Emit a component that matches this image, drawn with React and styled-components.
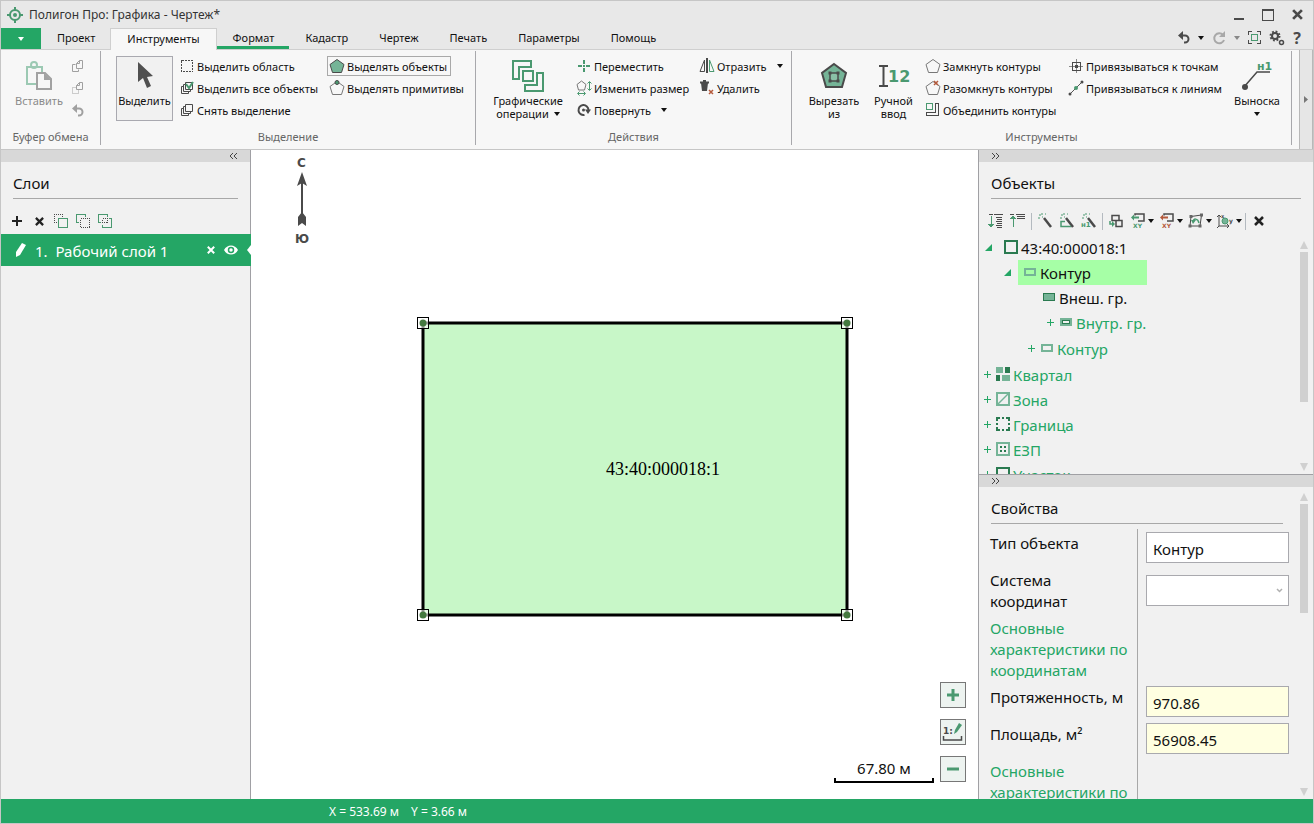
import React from "react";
import styled, { createGlobalStyle } from "styled-components";

const green = "#24a665";
const ink = "#4a4a4a";
const leaf = "#4a9970";
const mint = "#75b497";
const pine = "#2a7a50";

/* ---------- icons ---------- */

const Icon = ({ w = 16, h = 16, crisp, children }) => (
  <svg
    width={w}
    height={h}
    viewBox={`0 0 ${w} ${h}`}
    fill="none"
    stroke={ink}
    shapeRendering={crisp ? "crispEdges" : "auto"}
    aria-hidden="true"
  >
    {children}
  </svg>
);

const Caret = ({ color = "#111" }) => (
  <Icon w={6} h={4}>
    <path d="M0 0h6L3 4z" fill={color} stroke="none" />
  </Icon>
);

const LogoIcon = () => (
  <Icon>
    <g stroke={leaf}>
      <circle cx="8" cy="8" r="5" strokeWidth="2" />
      <circle cx="8" cy="8" r="2" fill={leaf} stroke="none" />
      <path d="M8 0v4M8 12v4M0 8h4M12 8h4" strokeWidth="2" />
    </g>
  </Icon>
);

const PasteIcon = () => (
  <Icon w={26} h={30}>
    <g stroke="#9cc9b3" strokeWidth="2">
      <path d="M11 23H1V6h15v6" />
      <circle cx="8" cy="4" r="3" />
    </g>
    <path d="M11 12h8l6 6v10H11z" stroke="#a2a2a2" strokeWidth="2" fill="#f7f7f7" />
    <path d="M18 12v7h7z" fill="#a2a2a2" stroke="none" />
  </Icon>
);

const CopyIcon = () => (
  <Icon w={12} h={13}>
    <g stroke="#a0a0a0">
      <path d="M3.500 4.500h-3v7h6v-2" />
      <path d="M4.500 3.500l3-3h3v8h-6zM4.500 3.500h3v-3" />
    </g>
  </Icon>
);

const CutIcon = () => (
  <Icon w={12} h={13}>
    <g stroke="#a0a0a0">
      <path d="M4.500 5.500h-4v6h6v-3" strokeDasharray="1 1" />
      <path d="M4.500 3.500l3-3h3v7h-6zM4.500 3.500h3v-3" />
    </g>
  </Icon>
);

const UndoIcon = ({ color = ink }) => (
  <Icon w={12} h={13}>
    <path d="M4 4.500h3a3.500 3.500 0 0 1 0 7H6" stroke={color} strokeWidth="2" />
    <path d="M0 4.500L5 0v9z" fill={color} stroke="none" />
  </Icon>
);

const RedoIcon = () => (
  <Icon w={14} h={14}>
    <path d="M11 4A5 5 0 1 0 12 9" stroke="#a8a8a8" strokeWidth="2" />
    <path d="M13 0v6H7z" fill="#a8a8a8" stroke="none" />
  </Icon>
);

const FrameIcon = () => (
  <Icon w={13} h={13} crisp>
    <path d="M.5 4V.5H4M9 .5h3.500V4M12.500 9v3.500H9M4 12.500H.5V9" />
    <rect x="3.500" y="3.500" width="6" height="6" stroke={leaf} />
  </Icon>
);

const GearsIcon = () => (
  <Icon>
    <circle cx="6" cy="6" r="3" strokeWidth="2" />
    <circle cx="6" cy="6" r="4.500" strokeWidth="2" strokeDasharray="1.800 1.734" />
    <circle cx="12.500" cy="12.500" r="2" strokeWidth="1.500" />
  </Icon>
);

const CursorIcon = () => (
  <Icon w={16} h={28}>
    <path d="M1 0v20l5-4 4 10 4-2-4-9 6-1z" fill="#505050" stroke="none" />
  </Icon>
);

const DashedBoxIcon = () => (
  <Icon w={14} h={14} crisp>
    <rect x="1.500" y="1.500" width="11" height="11" strokeDasharray="2 1" />
  </Icon>
);

const StackIcon = ({ check }) => (
  <Icon w={14} h={14}>
    <path d="M5.500 1.500h7v7h-7zM5.500 3.500h-2v7h7v-2M3.500 5.500h-2v7h7v-2" />
    {check && <path d="M6 3l3 4 4-6" stroke={leaf} strokeWidth="2" />}
  </Icon>
);

const PentagonIcon = ({ fill = "none", stroke = "#777", children }) => (
  <Icon>
    <path d="M8 1.500l7 5-2.500 8h-9l-2.500-8z" fill={fill} stroke={stroke} />
    {children}
  </Icon>
);

const GraphicsIcon = () => (
  <Icon w={32} h={32} crisp>
    <g stroke={leaf} strokeWidth="2">
      <path d="M1 1h18v6H7v12H1z" />
      <path d="M31 13v18H13v-6h12V13z" />
      <rect x="11" y="11" width="10" height="10" fill="#f7f7f7" />
    </g>
  </Icon>
);

const MoveIcon = () => (
  <Icon w={14} h={14} crisp>
    <path
      d="M7 1v4M7 9v4M1 7h4M9 7h4M7 6v2"
      stroke={leaf}
      strokeWidth="2"
    />
  </Icon>
);

const ResizeIcon = () => (
  <Icon>
    <path d="M5.500 1L10 4.500 8.500 10h-6L1 4.500z" stroke="#777" />
    <g stroke={leaf}>
      <path d="M13.500 2v8M2 13.500h7" />
      <path d="M11.500 3.500l2-2 2 2M11.500 8.500l2 2 2-2M3.500 11.500l-2 2 2 2M7.500 11.500l2 2-2 2" />
    </g>
  </Icon>
);

const RotateIcon = () => (
  <Icon w={14} h={14}>
    <path d="M7.500 12A5 5 0 1 1 11.500 7" strokeWidth="2" />
    <path d="M8 6.500h6l-3 4.500z" fill={ink} stroke="none" />
    <circle cx="6.500" cy="7" r="1.500" fill={ink} stroke="none" />
  </Icon>
);

const MirrorIcon = () => (
  <Icon>
    <path d="M5.500 2v11.500H1z" />
    <path d="M8 0v15" strokeWidth="2" />
    <path d="M10.500 2v11.500H15z" stroke={leaf} />
  </Icon>
);

const TrashIcon = () => (
  <Icon>
    <path d="M1 2.500h9M4 1h3" strokeWidth="2" />
    <path d="M2 3h7l-1 8H3z" fill={ink} stroke="none" />
    <path d="M10 10l4 4M14 10l-4 4" stroke="#b55a3c" strokeWidth="1.500" />
  </Icon>
);

const ClipIcon = () => (
  <Icon w={28} h={28}>
    <path d="M14 2l12 9-4 14H6L2 11z" fill={mint} stroke={ink} strokeWidth="2" />
    <rect x="10" y="11" width="8" height="8" fill="#8ac0a6" strokeWidth="1.500" />
    <path d="M8.500 9.500h3v3h-3zM16.500 9.500h3v3h-3zM8.500 17.500h3v3h-3zM16.500 17.500h3v3h-3z" fill={ink} stroke="none" />
  </Icon>
);

const IconText = styled.text`
  font-family: "DejaVu Sans", sans-serif;
  font-weight: 700;
  font-size: ${(p) => p.$size}px;
  fill: ${(p) => p.$color || leaf};
  stroke: none;
`;

const ManualIcon = () => (
  <Icon w={34} h={24}>
    <path d="M2 2h9M2 22h9M6.500 2v20" strokeWidth="2" />
    <IconText x="11" y="18" $size={16}>
      12
    </IconText>
  </Icon>
);

const MergeIcon = () => (
  <Icon w={14} h={14} crisp>
    <path d="M9.500 .5h3v12H.5v-3h9z" />
    <rect x=".5" y=".5" width="6" height="6" stroke={leaf} />
  </Icon>
);

const SnapPointIcon = () => (
  <Icon w={14} h={14} crisp>
    <path d="M7.500 0v14M0 7.500h14" stroke="#888" />
    <rect x="3.500" y="3.500" width="8" height="8" />
    <rect x="6" y="6" width="3" height="3" fill={ink} stroke="none" />
  </Icon>
);

const SnapLineIcon = () => (
  <Icon>
    <path d="M1.500 14.500L14.500 1.500" stroke="#555" />
    <circle cx="2" cy="14" r="1.500" fill={ink} stroke="none" />
    <circle cx="14" cy="2" r="1.500" fill={ink} stroke="none" />
    <circle cx="8" cy="8" r="2" fill={leaf} stroke="none" />
  </Icon>
);

const CalloutIcon = () => (
  <Icon w={34} h={30}>
    <path d="M4 26L17 11h13" strokeWidth="1.500" />
    <circle cx="5" cy="26" r="3" fill={ink} stroke="none" />
    <IconText x="17" y="9" $size={11}>
      н1
    </IconText>
  </Icon>
);

const CrossIcon = ({ color = "#222", size = 10 }) => (
  <svg width={size} height={size} viewBox="0 0 10 10" aria-hidden="true">
    <path d="M1 1l8 8M9 1l-8 8" stroke={color} strokeWidth="2.500" />
  </svg>
);

const PlusIcon = () => (
  <Icon w={12} h={12} crisp>
    <path d="M6 1v10M1 6h10" stroke="#222" strokeWidth="2" />
  </Icon>
);

const LayerPairIcon = ({ kind }) => (
  <Icon w={14} h={14} crisp>
    {kind === "front" && (
      <>
        <path d="M8.500 3V.5h-8v8H3" strokeDasharray="1 1" />
        <rect x="4.500" y="4.500" width="9" height="9" stroke={leaf} />
      </>
    )}
    {kind === "back" && (
      <>
        <path d="M9.500 3V.5h-9v8H3" stroke={leaf} />
        <rect x="4.500" y="4.500" width="9" height="9" strokeDasharray="1 1" />
      </>
    )}
    {kind === "both" && (
      <>
        <path d="M9.500 3V.5h-9v8H3M11 4.500h2.500v9h-9V11" stroke={leaf} />
        <rect x="4.500" y="4.500" width="5" height="4" strokeDasharray="1 1" />
      </>
    )}
  </Icon>
);

const PencilIcon = () => (
  <Icon w={12} h={14}>
    <path d="M7 0l4 2-6 10-4 2V9z" fill="#fff" stroke="none" />
  </Icon>
);

const EyeIcon = () => (
  <Icon w={14} h={10}>
    <path d="M0 5C3-1 11-1 14 5 11 11 3 11 0 5z" fill="#fff" stroke="none" />
    <circle cx="7" cy="5" r="2.500" stroke={green} strokeWidth="1.500" />
  </Icon>
);

const ChevronsIcon = ({ right }) => (
  <Icon w={10} h={8}>
    <path
      d={right ? "M1 1l3 3-3 3M5 1l3 3-3 3" : "M5 1L2 4l3 3M9 1L6 4l3 3"}
      stroke="#444"
    />
  </Icon>
);

const ExpandAllIcon = () => (
  <Icon w={16} h={14} crisp>
    <path d="M1 .5h4M6 .5h9M8 3.500h6M9 5.500h5M8 7.500h6M9 9.500h5M8 11.500h6M9 13.500h5" />
    <path d="M3 2v9" stroke={leaf} />
    <path d="M0 10h6l-3 4z" fill={leaf} stroke="none" />
  </Icon>
);

const CollapseAllIcon = () => (
  <Icon w={16} h={14} crisp>
    <path d="M0 .5h4M6 .5h9M7 2.500h8M7 4.500h8" />
    <path d="M3 4v9" stroke={leaf} />
    <path d="M0 5h6L3 1z" fill={leaf} stroke="none" />
  </Icon>
);

const WandIcon = ({ kind }) => (
  <Icon>
    <path d="M7 5l7 9" strokeWidth="2.500" />
    <path d="M2 2h2M5 0v2M1 5h2M5 4h1M8 1h1" stroke={leaf} />
    {kind === "box" && <path d="M6 8.500H2v5h10" stroke={leaf} strokeWidth="1.500" />}
    {kind === "label" && (
      <IconText x="0" y="14" $size={7}>
        н1
      </IconText>
    )}
  </Icon>
);

const TransferIcon = () => (
  <Icon w={14} h={14}>
    <path d="M3 1.500h7v5H3zM7 6.500h6v6H7z" strokeWidth="1.500" />
    <path d="M1 7v3h2" stroke={leaf} strokeWidth="1.500" />
    <path d="M3 7l3 3-3 3z" fill={leaf} stroke="none" />
  </Icon>
);

const XyIcon = ({ color }) => (
  <Icon>
    <path d="M5 2.500V1h9v7H8" strokeWidth="1.500" />
    <path d="M3 4.500h6" stroke={color} strokeWidth="2" />
    <path d="M4 1.500v6L1 4.500z" fill={color} stroke="none" />
    <IconText x="3" y="15" $size={6} $color={color}>
      XY
    </IconText>
  </Icon>
);

const TransformIcon = () => (
  <Icon>
    <path d="M3 3.500L13.500 2 12 13H2z" />
    <path d="M1.500 2h3v3h-3zM12 .5h3v3h-3zM10.500 11.500h3v3h-3zM.5 11.500h3v3h-3z" fill="#666" stroke="none" />
    <path d="M5 9c0-4 5-4 6 1" stroke={leaf} strokeWidth="1.500" />
    <path d="M3 7h5l-3 4z" fill={leaf} stroke="none" />
  </Icon>
);

const AxesIcon = () => (
  <Icon w={18} h={16}>
    <path d="M3 2v11h10M1 4l2-2 2 2M11 11l2 2-2 2M1 15l2-2" />
    <circle cx="9" cy="8" r="3" fill={mint} stroke={leaf} />
    <IconText x="5" y="5" $size={5} $color={ink}>
      x
    </IconText>
    <IconText x="13" y="10" $size={6} $color={ink}>
      y
    </IconText>
  </Icon>
);

const treeIcons = {
  square: (
    <Icon w={14} h={14} crisp>
      <rect x="1" y="1" width="12" height="12" stroke={pine} strokeWidth="2" />
    </Icon>
  ),
  outline: (
    <Icon w={12} h={8} crisp>
      <rect x="1" y="1" width="10" height="6" stroke={mint} strokeWidth="2" />
    </Icon>
  ),
  filled: (
    <Icon w={12} h={8} crisp>
      <rect x=".5" y=".5" width="11" height="7" fill={mint} stroke={pine} />
    </Icon>
  ),
  inner: (
    <Icon w={12} h={8} crisp>
      <rect width="12" height="8" fill={mint} stroke="none" />
      <rect x="2.500" y="2.500" width="7" height="3" fill="#f1f1f1" stroke={pine} />
    </Icon>
  ),
  quarter: (
    <Icon w={14} h={14} crisp>
      <path d="M0 0h7v6H0zM6 8h8v6H6z" fill={mint} stroke="none" />
      <path d="M9 0h5v6H9zM0 8h4v6H0z" fill={pine} stroke="none" />
    </Icon>
  ),
  zone: (
    <Icon w={14} h={14}>
      <rect x="1" y="1" width="12" height="12" stroke={mint} strokeWidth="2" />
      <path d="M2 12L12 2" stroke={mint} strokeWidth="1.500" />
    </Icon>
  ),
  border: (
    <Icon w={14} h={14} crisp>
      <path
        d="M1 4V1h3M6 1h2M10 1h3v3M13 6v2M13 10v3h-3M8 13H6M4 13H1v-3M1 8V6"
        stroke={pine}
        strokeWidth="2"
      />
    </Icon>
  ),
  ezp: (
    <Icon w={14} h={14} crisp>
      <rect x="1" y="1" width="12" height="12" stroke={mint} strokeWidth="2" />
      <path d="M4 4h2v2H4zM8 4h2v2H8zM4 8h2v2H4zM8 8h2v2H8z" fill={pine} stroke="none" />
    </Icon>
  ),
};

/* ---------- layout ---------- */

const GlobalStyle = createGlobalStyle`
  * {
    box-sizing: border-box;
  }
  body {
    margin: 0;
    font-family: "Noto Sans", "Open Sans", sans-serif;
    font-size: 11px;
    color: #111;
  }
  button, input, select {
    font: inherit;
    color: inherit;
  }
  button {
    padding: 0;
    border: none;
    background: none;
  }
  svg {
    display: block;
    flex: none;
  }
`;

const Window = styled.div`
  display: flex;
  flex-direction: column;
  height: 100vh;
  overflow: hidden;
  border: 1px solid #c6c6c6;
  background: #e8e8e8;
`;

const TitleBar = styled.header`
  display: flex;
  align-items: center;
  gap: 6px;
  height: 27px;
  padding: 0 10px 0 6px;
  h1 {
    flex: 1;
    margin: 0;
    font-size: 12px;
    font-weight: 400;
    color: #333;
  }
`;

const WindowButtons = styled.div`
  display: flex;
  gap: 18px;
  button {
    display: flex;
    height: 12px;
    align-items: center;
  }
`;

const TabBar = styled.nav`
  display: flex;
  height: 21px;
`;

const MenuButton = styled.button`
  display: flex;
  align-items: center;
  justify-content: center;
  width: 40px;
  background: ${green};
`;

const Tab = styled.button`
  position: relative;
  margin-bottom: ${(p) => (p.$active ? -1 : 0)}px;
  padding: 0 ${(p) => (p.$active ? 16 : 15)}px 2px 16px;
  border: 1px solid #cfcfcf;
  border-width: ${(p) => (p.$active ? "1px 1px 0" : 0)};
  background: ${(p) => (p.$active ? "#f7f7f7" : "none")};
  box-shadow: ${(p) => (p.$marked ? `inset 0 -3px ${green}` : "none")};
`;

const QuickTools = styled.div`
  display: flex;
  align-items: center;
  gap: 8px;
  margin-left: auto;
  padding: 0 12px 2px 0;
  button {
    display: flex;
    align-items: center;
    font-size: 16px;
    font-weight: 700;
    line-height: 16px;
    color: ${ink};
  }
`;

const Ribbon = styled.div`
  display: flex;
  flex: none;
  height: 101px;
  border-top: 1px solid #cfcfcf;
  border-bottom: 1px solid #c6c6c6;
  background: #f7f7f7;
`;

const Group = styled.section`
  display: flex;
  flex-direction: column;
  flex: none;
  width: ${(p) => p.$width}px;
  height: 94px;
  margin-top: 1px;
  border-right: 1px solid #a8a8ac;
`;

const GroupBody = styled.div`
  display: flex;
  flex: 1;
  gap: ${(p) => p.$gap}px;
  padding: 5px 0 0 ${(p) => p.$left}px;
`;

const GroupTitle = styled.div`
  height: 17px;
  line-height: 17px;
  text-align: center;
  color: #666;
`;

const BigButton = styled.button`
  display: flex;
  flex-direction: column;
  align-items: center;
  width: ${(p) => p.$width}px;
  height: 65px;
  line-height: 13px;
  white-space: nowrap;
  color: ${(p) => (p.disabled ? "#8a8a8a" : "#111")};
  border: 1px solid ${(p) => (p.$active ? "#a9a9b0" : "transparent")};
  background: ${(p) => (p.$active ? "#f1f1f1" : "none")};
`;

const BigIcon = styled.span`
  display: flex;
  align-items: center;
  justify-content: center;
  height: 37px;
`;

const Inline = styled.span`
  display: flex;
  align-items: center;
  gap: 5px;
  height: 13px;
`;

const Column = styled.div`
  display: flex;
  flex-direction: column;
  align-items: flex-start;
  width: ${(p) => p.$width}px;
`;

const SmallButton = styled.button`
  display: flex;
  align-items: center;
  gap: 2px;
  height: 20px;
  margin-bottom: 2px;
  padding: 0 3px 0 1px;
  white-space: nowrap;
  border: 1px solid ${(p) => (p.$active ? "#a9a9a9" : "transparent")};
`;

const SmallIcon = styled.span`
  display: flex;
  justify-content: center;
  width: 16px;
`;

const CaretSlot = styled.span`
  padding-left: 8px;
`;

const RibbonScroll = styled.button`
  display: flex;
  align-items: center;
  justify-content: center;
  width: 14px;
  margin-left: auto;
  border-left: 1px solid #b8b8b8;
  border-right: 1px solid #b8b8b8;
  background: #e6e6e6;
`;

const Workspace = styled.div`
  display: flex;
  flex: 1;
  min-height: 0;
`;

const Side = styled.aside`
  display: flex;
  flex-direction: column;
  flex: none;
  width: ${(p) => p.$width}px;
  background: #f1f1f1;
  border: 0 solid #a0a0a4;
  border-width: ${(p) => (p.$right ? "0 0 0 1px" : "0 1px 0 0")};
`;

const Strip = styled.div`
  display: flex;
  flex: none;
  align-items: center;
  justify-content: ${(p) => (p.$right ? "flex-start" : "flex-end")};
  height: 12px;
  padding: 0 12px;
  background: #d8d8d8;
`;

const PanelTitle = styled.h2`
  flex: none;
  margin: 0 ${(p) => p.$end || 12}px 0 12px;
  height: 37px;
  font-size: 15px;
  font-weight: 400;
  line-height: 42px;
  border-bottom: 1px solid #a8a8a8;
`;

const Toolbar = styled.div`
  display: flex;
  flex: none;
  align-items: center;
  height: 34px;
  padding: 10px 0 0 ${(p) => (p.$right ? 6 : 5)}px;
  margin-bottom: ${(p) => (p.$right ? 2 : 1)}px;
`;

const ToolButton = styled.button`
  display: flex;
  align-items: center;
  justify-content: center;
  gap: 2px;
  width: ${(p) => (p.$menu ? 29 : 22)}px;
  height: 22px;
`;

const Divider = styled.span`
  width: 1px;
  height: 17px;
  margin: 0 2px;
  background: #b4bac0;
`;

const LayerRow = styled.div`
  display: flex;
  align-items: center;
  height: 32px;
  margin-right: -1px;
  padding-left: 14px;
  font-size: 15px;
  color: #fff;
  background: ${green};
  button {
    display: flex;
    margin-right: 9px;
  }
`;

const LayerName = styled.span`
  flex: 1;
  padding: 2px 0 0 8px;
  white-space: pre;
`;

const Canvas = styled.main`
  position: relative;
  flex: 1;
  min-width: 0;
  background: #fff;
`;

const Compass = styled.div`
  position: absolute;
  top: 4px;
  left: 43px;
`;

const MapTools = styled.div`
  position: absolute;
  right: 12px;
  bottom: 17px;
  display: flex;
  align-items: flex-end;
  gap: 6px;
`;

const ZoomButtons = styled.div`
  display: flex;
  flex-direction: column;
  gap: 11px;
  button {
    display: flex;
    align-items: center;
    justify-content: center;
    width: 26px;
    height: 26px;
    border: 1px solid #777;
    background: #edf3f0;
  }
`;

const ScaleBar = styled.div`
  width: 100px;
  height: 26px;
  text-align: center;
  font-size: 15px;
  line-height: 25px;
`;

const ScaleRule = styled.div`
  height: 5px;
  margin-top: -3px;
  border: solid #000;
  border-width: 0 2px 2px;
`;

const Objects = styled.section`
  display: flex;
  flex-direction: column;
  flex: 1;
  min-height: 0;
`;

const Properties = styled.section`
  display: flex;
  flex-direction: column;
  flex: 0 0 325px;
  min-height: 0;
  overflow: hidden;
  border-top: 1px solid #a0a0a4;
`;

const ScrollArea = styled.div`
  display: flex;
  flex: 1 1 0;
  min-height: 0;
`;

const ScrollContent = styled.div`
  flex: 1;
  min-width: 0;
  overflow: hidden;
`;

const ScrollTrack = styled.div`
  display: flex;
  flex-direction: column;
  flex: none;
  width: 8px;
  margin: 6px 5px 3px 8px;
`;

const Thumb = styled.div`
  flex: 0 0 ${(p) => p.$size}%;
  margin: 3px 0 auto;
  background: #d0d0d0;
`;

const Tree = styled.ul`
  margin: 0;
  padding: 0 0 ${(p) => (p.$nested ? 1 : 0)}px;
  list-style: none;
`;

const Node = styled.button`
  display: flex;
  align-items: center;
  height: 25px;
  font-size: 15px;
  white-space: nowrap;
  color: ${(p) => (p.$ghost ? green : "#111")};
  padding-left: ${(p) => p.$indent}px;
`;

const Toggle = styled.span`
  display: flex;
  align-items: center;
  width: 12px;
`;

const NodeLabel = styled.span`
  display: flex;
  align-items: center;
  gap: ${(p) => (p.$nested ? 4 : 3)}px;
  height: 25px;
  min-width: ${(p) => (p.$selected ? 129 : 0)}px;
  margin-left: ${(p) => (p.$selected ? 4 : 0)}px;
  padding-left: ${(p) => p.$pad}px;
  background: ${(p) => (p.$selected ? "#a6ffa6" : "none")};
  svg {
    margin-bottom: 2px;
  }
`;

const PropTable = styled.div`
  margin-top: 5px;
  font-size: 15px;
`;

const PropRow = styled.div`
  display: grid;
  grid-template-columns: 159px 1fr;
  min-height: 37px;
`;

const PropLabel = styled.label`
  padding: 4px 8px 2px 11px;
  line-height: 21px;
  color: ${(p) => (p.$heading ? green : "#111")};
  border-right: 1px solid #a8a8a8;
`;

const Field = styled.div`
  position: relative;
  display: flex;
  align-items: center;
  padding: 3px 3px 3px 8px;
  input,
  select {
    width: 100%;
    height: 31px;
    padding: 2px 6px 0;
    border: 1px solid #a9a9ae;
    border-radius: 0;
    background: ${(p) => (p.$calculated ? "#ffffe1" : "#fff")};
    outline: none;
    appearance: none;
  }
`;

const SelectArrow = styled.span`
  position: absolute;
  right: 9px;
  pointer-events: none;
`;

const StatusBar = styled.footer`
  display: flex;
  flex: none;
  gap: 12px;
  align-items: center;
  height: 24px;
  padding-left: 328px;
  font-size: 12px;
  color: #fff;
  background: ${green};
`;

/* ---------- data ---------- */

const tabs = [
  { name: "Проект" },
  { name: "Инструменты", active: true },
  { name: "Формат", marked: true },
  { name: "Кадастр" },
  { name: "Чертеж" },
  { name: "Печать" },
  { name: "Параметры" },
  { name: "Помощь" },
];

const objects = [
  {
    label: "43:40:000018:1",
    icon: "square",
    indent: 4,
    pad: 9,
    open: true,
    children: [
      {
        label: "Контур",
        icon: "outline",
        indent: 23,
        pad: 6,
        open: true,
        selected: true,
        children: [
          { label: "Внеш. гр.", icon: "filled", indent: 64, pad: 0, leaf: true },
          { label: "Внутр. гр.", icon: "inner", indent: 67, pad: 2, ghost: true },
        ],
      },
      { label: "Контур", icon: "outline", indent: 48, pad: 2, ghost: true },
    ],
  },
  { label: "Квартал", icon: "quarter", indent: 4, pad: 1, ghost: true },
  { label: "Зона", icon: "zone", indent: 4, pad: 1, ghost: true },
  { label: "Граница", icon: "border", indent: 4, pad: 1, ghost: true },
  { label: "ЕЗП", icon: "ezp", indent: 4, pad: 1, ghost: true },
  { label: "Участок", icon: "square", indent: 4, pad: 1, ghost: true },
];

/* ---------- parts ---------- */

const Small = ({ icon, label, active, caret }) => (
  <SmallButton $active={active}>
    <SmallIcon>{icon}</SmallIcon>
    {label}
    {caret && (
      <CaretSlot>
        <Caret />
      </CaretSlot>
    )}
  </SmallButton>
);

const TreeToggle = ({ open }) => (
  <Toggle>
    {open ? (
      <Icon w={12} h={8}>
        <path d="M9 0v7H2z" fill={green} stroke="none" />
      </Icon>
    ) : (
      <Icon w={9} h={9} crisp>
        <path d="M4.500 1v7M1 4.500h7" stroke={green} />
      </Icon>
    )}
  </Toggle>
);

const TreeLevel = ({ items, nested }) => (
  <Tree $nested={nested}>
    {items.map((item, i) => (
      <li key={i}>
        <Node $indent={item.indent} $ghost={item.ghost}>
          {!item.leaf && <TreeToggle open={item.open} />}
          <NodeLabel $selected={item.selected} $nested={nested} $pad={item.pad}>
            {treeIcons[item.icon]}
            {item.label}
          </NodeLabel>
        </Node>
        {item.children && <TreeLevel items={item.children} nested />}
      </li>
    ))}
  </Tree>
);

const ScrollBar = ({ size }) => (
  <ScrollTrack>
    <Icon w={8} h={8}>
      <path d="M4 0l4 8H0z" fill="#d0d0d0" stroke="none" />
    </Icon>
    <Thumb $size={size} />
    <Icon w={8} h={8}>
      <path d="M4 8l4-8H0z" fill="#d0d0d0" stroke="none" />
    </Icon>
  </ScrollTrack>
);

const Handle = ({ x, y }) => (
  <g>
    <rect x={x - 5.5} y={y - 5.5} width="11" height="11" fill="#fff" fillOpacity=".6" stroke="#000" />
    <circle cx={x} cy={y} r="3.500" fill="#43793f" />
  </g>
);

const ParcelMap = () => (
  <svg width="100%" height="100%" viewBox="0 0 727 649" preserveAspectRatio="xMidYMid meet">
    <rect x="172" y="173" width="424" height="292" fill="#c8f7c8" stroke="#000" strokeWidth="3" />
    <text x="412" y="325" textAnchor="middle" fontFamily="Liberation Serif, serif" fontSize="18">
      43:40:000018:1
    </text>
    <Handle x={172} y={173} />
    <Handle x={596} y={173} />
    <Handle x={172} y={465} />
    <Handle x={596} y={465} />
  </svg>
);

const App = () => {
  return (
    <Window>
      <GlobalStyle />
      <TitleBar>
        <LogoIcon />
        <h1>Полигон Про: Графика - Чертеж*</h1>
        <WindowButtons>
          <button aria-label="Свернуть">
            <Icon w={10} h={12} crisp>
              <path d="M0 10h10" strokeWidth="2" />
            </Icon>
          </button>
          <button aria-label="Развернуть">
            <Icon w={12} h={12} crisp>
              <path d="M.5 1h11v10.500H.5z" />
              <path d="M0 1h12" strokeWidth="2" />
            </Icon>
          </button>
          <button aria-label="Закрыть">
            <CrossIcon color={ink} size={11} />
          </button>
        </WindowButtons>
      </TitleBar>

      <TabBar>
        <MenuButton aria-label="Меню">
          <Caret color="#fff" />
        </MenuButton>
        {tabs.map((tab) => (
          <Tab key={tab.name} $active={tab.active} $marked={tab.marked}>
            {tab.name}
          </Tab>
        ))}
        <QuickTools>
          <button aria-label="Отменить">
            <UndoIcon />
          </button>
          <Caret />
          <button aria-label="Вернуть">
            <RedoIcon />
          </button>
          <Caret color="#888" />
          <button aria-label="Во весь экран">
            <FrameIcon />
          </button>
          <button aria-label="Настройки">
            <GearsIcon />
          </button>
          <button>?</button>
        </QuickTools>
      </TabBar>

      <Ribbon>
        <Group $width={100}>
          <GroupBody $left={9} $gap={2}>
            <BigButton $width={58} disabled>
              <BigIcon>
                <PasteIcon />
              </BigIcon>
              Вставить
            </BigButton>
            <Column $width={20}>
              <SmallButton aria-label="Копировать">
                <CopyIcon />
              </SmallButton>
              <SmallButton aria-label="Вырезать">
                <CutIcon />
              </SmallButton>
              <SmallButton aria-label="Отменить вставку">
                <UndoIcon color="#a0a0a0" />
              </SmallButton>
            </Column>
          </GroupBody>
          <GroupTitle>Буфер обмена</GroupTitle>
        </Group>

        <Group $width={375}>
          <GroupBody $left={15} $gap={4}>
            <BigButton $width={57} $active>
              <BigIcon>
                <CursorIcon />
              </BigIcon>
              Выделить
            </BigButton>
            <Column $width={146}>
              <Small icon={<DashedBoxIcon />} label="Выделить область" />
              <Small icon={<StackIcon check />} label="Выделить все объекты" />
              <Small icon={<StackIcon />} label="Снять выделение" />
            </Column>
            <Column $width={140}>
              <Small
                active
                icon={<PentagonIcon fill={mint} stroke={ink} />}
                label="Выделять объекты"
              />
              <Small
                icon={
                  <PentagonIcon>
                    <circle cx="8" cy="2.500" r="2" fill={leaf} />
                  </PentagonIcon>
                }
                label="Выделять примитивы"
              />
            </Column>
          </GroupBody>
          <GroupTitle>Выделение</GroupTitle>
        </Group>

        <Group $width={316}>
          <GroupBody $left={12} $gap={6}>
            <BigButton $width={80}>
              <BigIcon>
                <GraphicsIcon />
              </BigIcon>
              Графические
              <Inline>
                операции <Caret />
              </Inline>
            </BigButton>
            <Column $width={117}>
              <Small icon={<MoveIcon />} label="Переместить" />
              <Small icon={<ResizeIcon />} label="Изменить размер" />
              <Small icon={<RotateIcon />} label="Повернуть" caret />
            </Column>
            <Column $width={90}>
              <Small icon={<MirrorIcon />} label="Отразить" caret />
              <Small icon={<TrashIcon />} label="Удалить" />
            </Column>
          </GroupBody>
          <GroupTitle>Действия</GroupTitle>
        </Group>

        <Group $width={500}>
          <GroupBody $left={12} $gap={3}>
            <BigButton $width={60}>
              <BigIcon>
                <ClipIcon />
              </BigIcon>
              Вырезать
              <span>из</span>
            </BigButton>
            <BigButton $width={53}>
              <BigIcon>
                <ManualIcon />
              </BigIcon>
              Ручной
              <span>ввод</span>
            </BigButton>
            <Column $width={140}>
              <Small icon={<PentagonIcon />} label="Замкнуть контуры" />
              <Small
                icon={
                  <PentagonIcon>
                    <path d="M9 1l4 4M13 1L9 5" stroke="#b55a3c" strokeWidth="1.500" />
                  </PentagonIcon>
                }
                label="Разомкнуть контуры"
              />
              <Small icon={<MergeIcon />} label="Объединить контуры" />
            </Column>
            <Column $width={158}>
              <Small icon={<SnapPointIcon />} label="Привязываться к точкам" />
              <Small icon={<SnapLineIcon />} label="Привязываться к линиям" />
            </Column>
            <BigButton $width={60}>
              <BigIcon>
                <CalloutIcon />
              </BigIcon>
              Выноска
              <Inline>
                <Caret />
              </Inline>
            </BigButton>
          </GroupBody>
          <GroupTitle>Инструменты</GroupTitle>
        </Group>

        <RibbonScroll aria-label="Прокрутить ленту">
          <Icon w={4} h={7}>
            <path d="M0 0v7l4-3.500z" fill="#777" stroke="none" />
          </Icon>
        </RibbonScroll>
      </Ribbon>

      <Workspace>
        <Side $width={250}>
          <Strip>
            <ChevronsIcon />
          </Strip>
          <PanelTitle>Слои</PanelTitle>
          <Toolbar>
            <ToolButton aria-label="Добавить слой">
              <PlusIcon />
            </ToolButton>
            <ToolButton aria-label="Удалить слой">
              <CrossIcon size={9} />
            </ToolButton>
            <ToolButton aria-label="На передний план">
              <LayerPairIcon kind="front" />
            </ToolButton>
            <ToolButton aria-label="На задний план">
              <LayerPairIcon kind="back" />
            </ToolButton>
            <ToolButton aria-label="Объединить слои">
              <LayerPairIcon kind="both" />
            </ToolButton>
          </Toolbar>
          <LayerRow>
            <PencilIcon />
            <LayerName>1.  Рабочий слой 1</LayerName>
            <button aria-label="Удалить">
              <CrossIcon color="#fff" size={8} />
            </button>
            <button aria-label="Видимость">
              <EyeIcon />
            </button>
            <Icon w={4} h={10}>
              <path d="M4 0v10L0 5z" fill="#fff" stroke="none" />
            </Icon>
          </LayerRow>
        </Side>

        <Canvas>
          <ParcelMap />
          <Compass>
            <Icon w={16} h={96}>
              <IconText x="3" y="13" $size={12} $color={ink}>
                С
              </IconText>
              <path d="M8 24v44" strokeWidth="2" />
              <path d="M8 18l5 14-5-3-5 3z" fill={ink} stroke="none" />
              <path d="M4 63l4-5 4 5v9l-4-3-4 3z" fill={ink} stroke="none" />
              <IconText x="1" y="89" $size={12} $color={ink}>
                Ю
              </IconText>
            </Icon>
          </Compass>
          <MapTools>
            <ScaleBar>
              67.80 м
              <ScaleRule />
            </ScaleBar>
            <ZoomButtons>
              <button aria-label="Приблизить">
                <Icon w={12} h={12}>
                  <path d="M6 0v12M0 6h12" stroke={leaf} strokeWidth="3" />
                </Icon>
              </button>
              <button aria-label="Масштаб">
                <Icon w={22} h={20}>
                  <IconText x="1" y="12" $size={9} $color={ink}>
                    1:
                  </IconText>
                  <path d="M17 1l3 2-5 7-3 2 1-4z" fill={leaf} stroke="none" />
                  <path d="M1.500 14v4h18v-4" strokeWidth="1.500" />
                </Icon>
              </button>
              <button aria-label="Отдалить">
                <Icon w={12} h={12}>
                  <path d="M0 6h12" stroke={leaf} strokeWidth="3" />
                </Icon>
              </button>
            </ZoomButtons>
          </MapTools>
        </Canvas>

        <Side $width={335} $right>
          <Objects>
            <Strip $right>
              <ChevronsIcon right />
            </Strip>
            <PanelTitle>Объекты</PanelTitle>
            <Toolbar $right>
              <ToolButton aria-label="Развернуть все">
                <ExpandAllIcon />
              </ToolButton>
              <ToolButton aria-label="Свернуть все">
                <CollapseAllIcon />
              </ToolButton>
              <Divider />
              <ToolButton aria-label="Мастер">
                <WandIcon />
              </ToolButton>
              <ToolButton aria-label="Мастер контуров">
                <WandIcon kind="box" />
              </ToolButton>
              <ToolButton aria-label="Мастер подписей">
                <WandIcon kind="label" />
              </ToolButton>
              <Divider />
              <ToolButton aria-label="Перенести">
                <TransferIcon />
              </ToolButton>
              <ToolButton $menu aria-label="Импорт координат">
                <XyIcon color={leaf} />
                <Caret />
              </ToolButton>
              <ToolButton $menu aria-label="Экспорт координат">
                <XyIcon color="#b55a3c" />
                <Caret />
              </ToolButton>
              <ToolButton $menu aria-label="Преобразовать">
                <TransformIcon />
                <Caret />
              </ToolButton>
              <ToolButton $menu aria-label="Система координат">
                <AxesIcon />
                <Caret />
              </ToolButton>
              <Divider />
              <ToolButton aria-label="Удалить объект">
                <CrossIcon />
              </ToolButton>
            </Toolbar>
            <ScrollArea>
              <ScrollContent>
                <TreeLevel items={objects} />
              </ScrollContent>
              <ScrollBar size={65} />
            </ScrollArea>
          </Objects>

          <Properties>
            <Strip $right>
              <ChevronsIcon right />
            </Strip>
            <ScrollArea>
              <ScrollContent>
                <PanelTitle $end={9}>Свойства</PanelTitle>
                <PropTable>
                  <PropRow>
                    <PropLabel htmlFor="type">Тип объекта</PropLabel>
                    <Field>
                      <input id="type" defaultValue="Контур" />
                    </Field>
                  </PropRow>
                  <PropRow>
                    <PropLabel htmlFor="system">Система координат</PropLabel>
                    <Field>
                      <select id="system" />
                      <SelectArrow>
                        <Icon w={7} h={5}>
                          <path d="M1 1l2.500 2.500L6 1" stroke="#b0b0b0" strokeWidth="1.500" />
                        </Icon>
                      </SelectArrow>
                    </Field>
                  </PropRow>
                  <PropRow>
                    <PropLabel as="div" $heading>
                      Основные характеристики по координатам
                    </PropLabel>
                  </PropRow>
                  <PropRow>
                    <PropLabel htmlFor="length">Протяженность, м</PropLabel>
                    <Field $calculated>
                      <input id="length" defaultValue="970.86" />
                    </Field>
                  </PropRow>
                  <PropRow>
                    <PropLabel htmlFor="area">Площадь, м²</PropLabel>
                    <Field $calculated>
                      <input id="area" defaultValue="56908.45" />
                    </Field>
                  </PropRow>
                  <PropRow>
                    <PropLabel as="div" $heading>
                      Основные характеристики по
                    </PropLabel>
                  </PropRow>
                </PropTable>
              </ScrollContent>
              <ScrollBar size={36} />
            </ScrollArea>
          </Properties>
        </Side>
      </Workspace>

      <StatusBar>
        <span>X = 533.69 м</span>
        <span>Y = 3.66 м</span>
      </StatusBar>
    </Window>
  );
};

export default App;
